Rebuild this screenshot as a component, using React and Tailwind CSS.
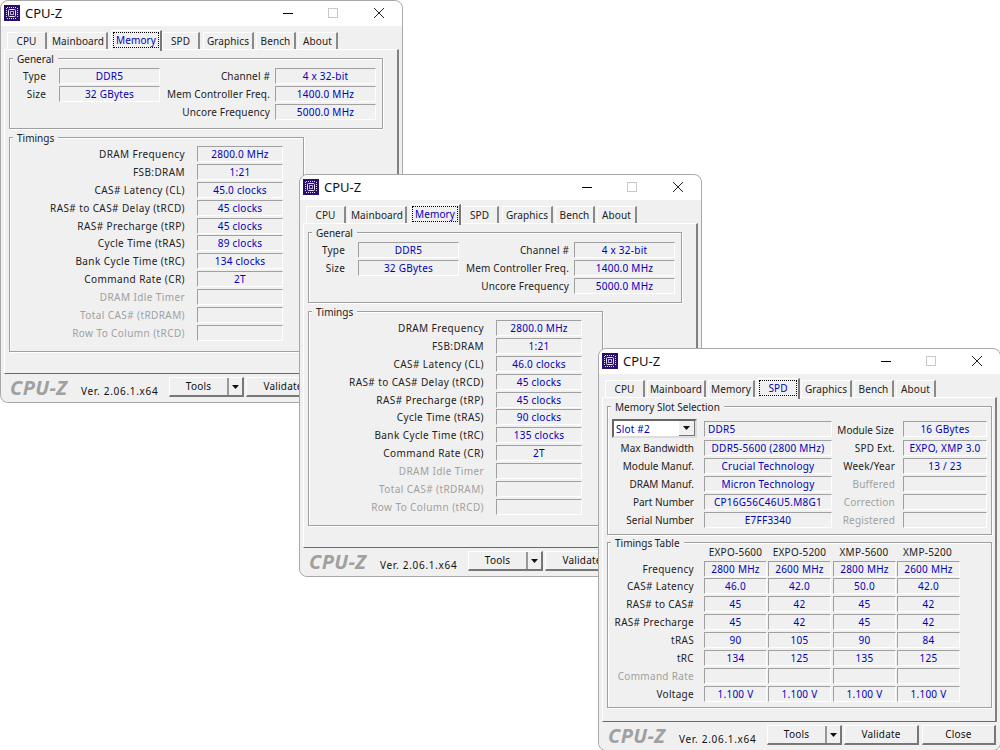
const box = "h-[16px] border-t border-l border-t-[#a0a0a0] border-l-[#a0a0a0] border-b border-r border-b-white border-r-white flex items-center justify-center text-[#0000b8] leading-none whitespace-nowrap tracking-[0.25px]";
const lab = "text-right whitespace-nowrap leading-none";

function Logo() {
  return (
    <svg width="16" height="16" viewBox="0 0 16 16" className="absolute left-[3px] top-[4px]">
      <rect width="16" height="16" fill="#2a0f6e" />
      <rect x="4.5" y="4.5" width="7" height="7" rx="1" fill="none" stroke="#e8e0f5" strokeWidth="1" />
      <rect x="6.5" y="6.5" width="3" height="3" fill="none" stroke="#b9a8dc" strokeWidth="1" />
      <path d="M3 2.5h10M3 13.5h10M2.5 3v10M13.5 3v10" stroke="#e8e0f5" strokeWidth="1" strokeDasharray="1 1" fill="none" />
    </svg>
  );
}

function Title() {
  return (
    <div className="relative h-[25px] bg-white rounded-t-[8px] shrink-0">
      <Logo />
      <span className="absolute left-[24px] top-[4px] text-[13px] leading-[16px] text-[#111] font-['Noto_Sans',sans-serif]">CPU-Z</span>
      <div className="absolute left-[282px] top-[12px] w-[10px] h-px bg-black" />
      <div className="absolute left-[327px] top-[7px] w-[10px] h-[10px] border border-[#c8c8c8]" />
      <svg width="12" height="12" viewBox="0 0 12 12" className="absolute left-[372px] top-[6px]">
        <path d="M1 1l10 10M11 1L1 11" stroke="#222" strokeWidth="1" fill="none" />
      </svg>
    </div>
  );
}

const normalTabs = [
  ["CPU", "left-[6px] w-[40px]"],
  ["Mainboard", "left-[48px] w-[59px]"],
  ["Memory", "left-[109px] w-[47px]"],
  ["SPD", "left-[161px] w-[38px]"],
  ["Graphics", "left-[202px] w-[51px]"],
  ["Bench", "left-[255px] w-[40px]"],
  ["About", "left-[297px] w-[40px]"],
];
const selTabs = {
  Memory: "left-[110px] w-[51px]",
  SPD: "left-[158px] w-[43px]",
};

function Tabs({ active }) {
  return (
    <div className="relative h-[23px] shrink-0 tracking-[0.1px]">
      {normalTabs.map(([t, c]) =>
        t === active ? null : (
          <div key={t} className={"absolute top-[6px] h-[18px] border-t border-l border-white border-r-2 border-r-[#8a8a8a] flex items-center justify-center text-[#222] " + c}>
            {t}
          </div>
        )
      )}
      <div className={"absolute top-[4px] h-[21px] z-10 bg-[#f0f0f0] border-t border-l border-white border-r-2 border-r-[#777] flex items-start justify-center pt-[1px] " + selTabs[active]}>
        <div className="w-full mx-[1px] h-[16px] border border-dotted border-black flex items-center justify-center text-[#0000b8]">{active}</div>
      </div>
    </div>
  );
}

function Group({ title, className, children }) {
  return (
    <div className={"absolute border border-[#a0a0a0] shadow-[1px_1px_0_white,inset_1px_1px_0_white] " + className}>
      <span className="absolute left-[3px] -top-[7px] px-[4px] bg-[#f0f0f0] leading-[14px] text-[#222] whitespace-nowrap">{title}</span>
      {children}
    </div>
  );
}

function Footer() {
  return (
    <div className="relative h-[28px] shrink-0 bg-[#f0f0f0] rounded-b-[8px]">
      <span className="absolute left-[9px] top-[2px] text-[20px] leading-[24px] font-bold italic text-[#a0a0a0] tracking-[0.4px] font-['Liberation_Sans',sans-serif]">CPU-Z</span>
      <span className="absolute left-[80px] top-[11px] leading-[13px] text-[#111] tracking-[0.7px]">Ver. 2.06.1.x64</span>
      <div className="absolute left-[168px] top-[3px] w-[75px] h-[20px] flex border-t border-l border-t-white border-l-white border-r-2 border-b-2 border-r-[#777] border-b-[#777] bg-[#f0f0f0]">
        <div className="w-[57px] flex items-center justify-center text-[#111] tracking-[0.2px]">Tools</div>
        <div className="flex-1 border-l-2 border-l-[#999] flex items-center justify-center">
          <svg width="7" height="4" viewBox="0 0 7 4"><path d="M0 0h7L3.5 4z" fill="#111" /></svg>
        </div>
      </div>
      <div className="absolute left-[245px] top-[3px] w-[75px] h-[20px] flex items-center justify-center border-t border-l border-t-white border-l-white border-r-2 border-b-2 border-r-[#777] border-b-[#777] bg-[#f0f0f0] text-[#111] tracking-[0.2px]">Validate</div>
      <div className="absolute left-[323px] top-[3px] w-[74px] h-[20px] flex items-center justify-center border-t border-l border-t-white border-l-white border-r-2 border-b-2 border-r-[#777] border-b-[#777] bg-[#f0f0f0] text-[#111] tracking-[0.2px]">Close</div>
    </div>
  );
}

function GeneralRow({ l, v, rl, rv }) {
  return (
    <div className="flex h-[16px] items-center">
      <div className={"w-[36px] tracking-[0.2px] " + lab}>{l}</div>
      {v ? <div className={"ml-[13px] w-[101px] " + box}>{v}</div> : <div className="ml-[13px] w-[101px]" />}
      <div className={"w-[110px] tracking-[0.15px] " + lab}>{rl}</div>
      <div className={"ml-[5px] w-[101px] " + box}>{rv}</div>
    </div>
  );
}

function TimingRow({ l, v, off }) {
  return (
    <div className="flex h-[16px] items-center">
      <div className={"w-[175px] tracking-[0.4px] " + lab + (off ? " text-[#a0a0a0]" : "")}>{l}</div>
      <div className={"ml-[12px] w-[86px] " + box}>{v}</div>
    </div>
  );
}

function MemoryPage({ t }) {
  return (
    <>
      <Group title="General" className="left-[4px] top-[8px] w-[374px] h-[71px]">
        <div className="flex flex-col gap-[2px] pt-[9px]">
          <GeneralRow l="Type" v="DDR5" rl="Channel #" rv="4 x 32-bit" />
          <GeneralRow l="Size" v="32 GBytes" rl="Mem Controller Freq." rv="1400.0 MHz" />
          <GeneralRow rl="Uncore Frequency" rv="5000.0 MHz" />
        </div>
      </Group>
      <Group title="Timings" className="left-[4px] top-[87px] w-[295px] h-[215px]">
        <div className="flex flex-col gap-[2px] pt-[8px]">
          <TimingRow l="DRAM Frequency" v="2800.0 MHz" />
          <TimingRow l="FSB:DRAM" v="1:21" />
          <TimingRow l="CAS# Latency (CL)" v={t[0]} />
          <TimingRow l="RAS# to CAS# Delay (tRCD)" v={t[1]} />
          <TimingRow l="RAS# Precharge (tRP)" v={t[2]} />
          <div className="-mt-[1px]"><TimingRow l="Cycle Time (tRAS)" v={t[3]} /></div>
          <TimingRow l="Bank Cycle Time (tRC)" v={t[4]} />
          <TimingRow l="Command Rate (CR)" v="2T" />
          <TimingRow l="DRAM Idle Timer" off />
          <TimingRow l="Total CAS# (tRDRAM)" off />
          <TimingRow l="Row To Column (tRCD)" off />
        </div>
      </Group>
    </>
  );
}

function SpdRow({ l, v, rl, rv, off }) {
  return (
    <div className="flex h-[16px] items-center">
      <div className={"w-[86px] " + lab}>{l}</div>
      <div className={"ml-[10px] w-[128px] " + box}>{v}</div>
      <div className={"w-[63px] tracking-[0.2px] " + lab + (off ? " text-[#a0a0a0]" : "")}>{rl}</div>
      <div className={"ml-[8px] w-[84px] " + box}>{rv}</div>
    </div>
  );
}

const table = [
  ["Frequency", "2800 MHz", "2600 MHz", "2800 MHz", "2600 MHz"],
  ["CAS# Latency", "46.0", "42.0", "50.0", "42.0"],
  ["RAS# to CAS#", "45", "42", "45", "42"],
  ["RAS# Precharge", "45", "42", "45", "42"],
  ["tRAS", "90", "105", "90", "84"],
  ["tRC", "134", "125", "135", "125"],
  ["Command Rate", "", "", "", ""],
  ["Voltage", "1.100 V", "1.100 V", "1.100 V", "1.100 V"],
];

function SpdPage() {
  return (
    <>
      <Group title="Memory Slot Selection" className="left-[4px] top-[8px] w-[385px] h-[129px]">
        <div className="absolute left-[4px] top-[12px] w-[85px] h-[19px] bg-white border-2 border-t-[#666] border-l-[#666] border-b-[#ddd] border-r-[#ddd] flex items-center pl-[2px] text-[#0000b8] leading-none tracking-[0.2px]">
          Slot #2
          <div className="absolute right-0 top-0 w-[16px] h-[15px] bg-[#f0f0f0] border-r border-b border-[#777] flex items-center justify-center">
            <svg width="7" height="4" viewBox="0 0 7 4"><path d="M0 0h7L3.5 4z" fill="#111" /></svg>
          </div>
        </div>
        <div className={"absolute left-[96px] top-[14px] w-[128px] !justify-start pl-[3px] " + box}>DDR5</div>
        <div className={"absolute right-[97px] top-[15px] h-[16px] flex items-center " + lab}>Module Size</div>
        <div className={"absolute left-[295px] top-[14px] w-[84px] " + box}>16 GBytes</div>
        <div className="absolute left-0 top-[33px] flex flex-col gap-[2px]">
          <SpdRow l="Max Bandwidth" v="DDR5-5600 (2800 MHz)" rl="SPD Ext." rv="EXPO, XMP 3.0" />
          <SpdRow l="Module Manuf." v="Crucial Technology" rl="Week/Year" rv="13 / 23" />
          <SpdRow l="DRAM Manuf." v="Micron Technology" rl="Buffered" off />
          <SpdRow l="Part Number" v="CP16G56C46U5.M8G1" rl="Correction" off />
          <SpdRow l="Serial Number" v="E7FF3340" rl="Registered" off />
        </div>
      </Group>
      <Group title="Timings Table" className="left-[4px] top-[144px] w-[385px] h-[166px]">
        <div className="absolute left-[96px] top-[2px] grid grid-cols-[63px_65px_64px_63px] text-center leading-[14px] text-[#222] tracking-[0.25px]">
          <div className="whitespace-nowrap">EXPO-5600</div>
          <div className="whitespace-nowrap">EXPO-5200</div>
          <div className="whitespace-nowrap">XMP-5600</div>
          <div className="whitespace-nowrap">XMP-5200</div>
        </div>
        <div className="absolute left-0 top-[18px] flex flex-col gap-[2px]">
          {table.map((r, i) => (
            <div key={r[0]} className={"flex h-[16px] items-center" + (i === 1 ? " -mt-[1px]" : "")}>
              <div className={"w-[86px] tracking-[0.3px] " + lab + (r[0] === "Command Rate" ? " text-[#a0a0a0]" : "")}>{r[0]}</div>
              <div className={"ml-[10px] w-[63px] " + box}>{r[1]}</div>
              <div className={"ml-[1px] w-[63px] " + box}>{r[2]}</div>
              <div className={"ml-[2px] w-[63px] " + box}>{r[3]}</div>
              <div className={"ml-[1px] w-[63px] " + box}>{r[4]}</div>
            </div>
          ))}
        </div>
      </Group>
    </>
  );
}

function Win({ pos, active, children }) {
  return (
    <div className={"absolute w-[403px] h-[403px] flex flex-col bg-[#f0f0f0] border border-[#a8a8a8] rounded-[8px] text-[10px] text-[#222] " + pos}>
      <Title />
      <div className="relative flex-1 flex flex-col">
        <Tabs active={active} />
        <div className="relative ml-[3px] mr-[3px] h-[325px] shrink-0 border-t border-l border-t-white border-l-white border-r-2 border-r-[#808080] border-b border-b-[#696969]">
          {children}
        </div>
        <Footer />
      </div>
    </div>
  );
}

export default function App() {
  return (
    <div className="relative w-[1000px] h-[750px] overflow-hidden bg-white [font-stretch:condensed] font-['DejaVu_Sans','Liberation_Sans',sans-serif]">
      <Win pos="left-0 top-0 z-0" active="Memory">
        <MemoryPage t={["45.0 clocks", "45 clocks", "45 clocks", "89 clocks", "134 clocks"]} />
      </Win>
      <Win pos="left-[299px] top-[174px] z-10" active="Memory">
        <MemoryPage t={["46.0 clocks", "45 clocks", "45 clocks", "90 clocks", "135 clocks"]} />
      </Win>
      <Win pos="left-[598px] top-[348px] z-20" active="SPD">
        <SpdPage />
      </Win>
    </div>
  );
}
